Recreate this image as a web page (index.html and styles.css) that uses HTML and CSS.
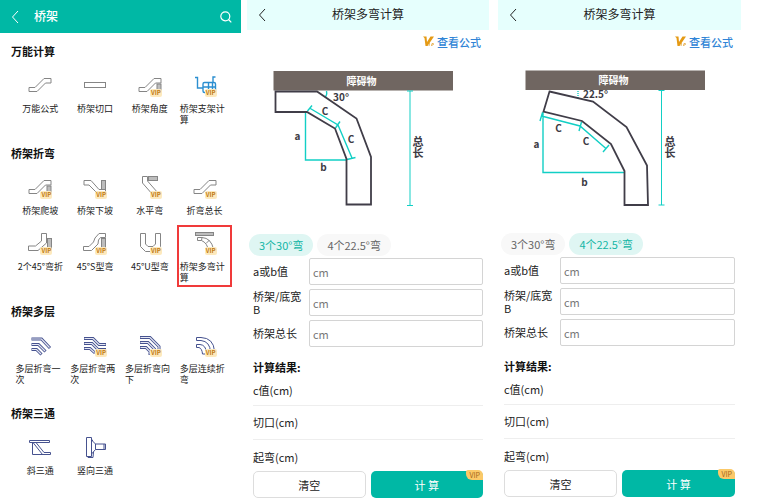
FILE: index.html
```html
<!DOCTYPE html>
<html lang="zh-CN">
<head>
<meta charset="utf-8">
<meta name="viewport" content="width=device-width, initial-scale=1">
<title>桥架</title>
<link rel="stylesheet" href="styles.css">
</head>
<body>
<svg class="defs" aria-hidden="true">
  <symbol id="slope" viewBox="0 0 24 24">
    <path d="M1 18.500V14.500H7L16 5.500H23V10H17.500L9 18.500Z"/>
  </symbol>
  <symbol id="vmark" viewBox="0 0 12 11">
    <path d="M0 .5H3.500L4 6L7.500 .5H11L4.500 10H2.500L1.500 2Z" fill="#e59a14"/>
    <path d="M6.500 7L6 10M8.500 10L9 7.500Q11 7 10.500 8.500Q10 9 9 9" fill="none" stroke="#e8b45a" stroke-width="1"/>
  </symbol>
</svg>
<main class="screens">
  <section class="screen menu">
    <header class="bar bar-main">
      <button class="back" aria-label="返回"><svg viewBox="0 0 8 14"><path d="M7 1L1.500 7L7 13"/></svg></button>
      <h1>桥架</h1>
      <button class="search" aria-label="搜索"><svg viewBox="0 0 12 12"><circle cx="5.300" cy="5.300" r="4.500"/><path d="M8.500 8.500L11.300 11.300"/></svg></button>
    </header>

    <section class="group">
      <h2>万能计算</h2>
      <div class="items">
        <a href="#"><svg class="icon" viewBox="0 0 24 24"><use href="#slope"/></svg><span>万能公式</span></a>
        <a href="#"><svg class="icon" viewBox="0 0 24 24"><rect x="1.500" y="9.500" width="21" height="5"/></svg><span>桥架切口</span></a>
        <a href="#"><svg class="icon" viewBox="0 0 24 24"><use href="#slope"/><rect class="wall" x="19" y="11" width="4" height="9"/></svg><b class="tag">VIP</b><span>桥架角度</span></a>
        <a href="#"><svg class="icon blue" viewBox="0 0 24 24"><path d="M2 4.500H4.500V15H10M22.500 4H20V9"/><rect x="10" y="9.500" width="12.500" height="10" rx="1.500"/><path d="M10 14H22.500M15.500 9.500V19M19.500 9.500V19"/></svg><b class="tag">VIP</b><span>桥架支架计算</span></a>
      </div>
    </section>

    <section class="group">
      <h2>桥架折弯</h2>
      <div class="items">
        <a href="#"><svg class="icon" viewBox="0 0 24 24"><use href="#slope"/><rect class="wall" x="19" y="11" width="4" height="9"/></svg><b class="tag">VIP</b><span>桥架爬坡</span></a>
        <a href="#"><svg class="icon" viewBox="0 0 24 24"><path d="M1 5.500H8L16 14.500H22.500V18.500H14.500L6 10H1Z"/><rect class="wall" x="18.500" y="5.500" width="4" height="9"/></svg><b class="tag">VIP</b><span>桥架下坡</span></a>
        <a href="#"><svg class="icon" viewBox="0 0 24 24"><path d="M15 20L4.500 8V1.500H9.500V6L20 18"/><rect class="wall" x="10.500" y="1.500" width="9" height="4"/></svg><b class="tag">VIP</b><span>水平弯</span></a>
        <a href="#"><svg class="icon" viewBox="0 0 24 24"><use href="#slope"/></svg><b class="tag">VIP</b><span>折弯总长</span></a>
        <a href="#"><svg class="icon" viewBox="0 0 24 24"><path d="M.5 15H7.500L13.500 10V2.500H18.500V12L10 19.500H.5Z"/><rect class="wall" x="19.500" y="7.500" width="4" height="10"/></svg><b class="tag">VIP</b><span>2个45°弯折</span></a>
        <a href="#"><svg class="icon" viewBox="0 0 24 24"><path d="M.5 15.500H6L10.500 11L12 7L16 2.500H22.500V6.500H17.500L15.500 9L15 13L8.500 19.500H.5Z"/><rect class="wall" x="18.500" y="7.500" width="4" height="10"/></svg><b class="tag">VIP</b><span>45°S型弯</span></a>
        <a href="#"><svg class="icon" viewBox="0 0 24 24"><path d="M2.500 2.500V15.500L7.500 20.500H17.500L22.500 15.500V2.500H17.500V13L15 15.500H10L7.500 13V2.500Z"/></svg><b class="tag">VIP</b><span>45°U型弯</span></a>
        <a href="#" class="selected"><svg class="icon" viewBox="0 0 24 24"><rect class="wall" x="2.500" y="1.500" width="18" height="3"/><path d="M15.500 20Q14.500 12 8.500 9.500H4.500V6.500H9Q18 7 20.500 18M9 6.500L8.500 9.500M16.500 9L13 12.500"/></svg><b class="tag">VIP</b><span>桥架多弯计算</span></a>
      </div>
    </section>

    <section class="group">
      <h2>桥架多层</h2>
      <div class="items">
        <a href="#"><svg class="icon navy" viewBox="0 0 24 24"><path class="band" d="M3.500 6H13.500L22 15M3.500 11.500H10.500L17.500 18.500M3.500 16.500H8.500L13.500 21.500"/><path class="fill" d="M4 6H13.500L21.500 14.500M4 11.500H10.500L17 18M4 16.500H8.500L13 21"/></svg><span>多层折弯一次</span></a>
        <a href="#"><svg class="icon navy" viewBox="0 0 24 24"><path class="band" d="M1 5.500H10L16 11.500H23M1 10.500H9L15 16.500H23M1 15.500H7L12 20"/><path class="fill" d="M1.500 5.500H10L16 11.500H22.500M1.500 10.500H9L15 16.500H22.500M1.500 15.500H7L11.500 19.500"/></svg><b class="tag">VIP</b><span>多层折弯两次</span></a>
        <a href="#"><svg class="icon navy" viewBox="0 0 24 24"><path class="band" d="M2 4.500H12L21 13.500V19M2 9.500H10L16.500 16V20M2 14.500H8L12 18.500V22"/><path class="fill" d="M2.500 4.500H12L21 13.500V18.500M2.500 9.500H10L16.500 16V19.500M2.500 14.500H8L12 18.500V21.500"/></svg><b class="tag">VIP</b><span>多层折弯向下</span></a>
        <a href="#"><svg class="icon navy" viewBox="0 0 24 24"><path d="M3.500 7.500V4.500H8Q20.500 5 21.500 18M3.500 7.500H8Q17 8.500 17.500 19M3.500 14.500V11.500H7Q13 12 13.500 20M3.500 14.500H6Q9 15.500 9.500 21H13"/></svg><b class="tag">VIP</b><span>多层连续折弯</span></a>
      </div>
    </section>

    <section class="group">
      <h2>桥架三通</h2>
      <div class="items">
        <a href="#"><svg class="icon navy" viewBox="0 0 24 24"><path d="M1.500 5.500H21.500V7.500H1.500ZM4.500 7.500V19.500H22.500V17.500H16L8 7.500M5 7.500L14.500 19.500"/></svg><span>斜三通</span></a>
        <a href="#"><svg class="icon navy" viewBox="0 0 24 24"><path d="M3.500 2.500H8.500V21.500H3.500ZM8.500 5L12.500 9V14.500L8.500 19M12.500 9H22.500V14.500H12.500M21 9V14.500M5 21.500V22.500H10L10.500 17M8.500 5H9.500V6"/></svg><span>竖向三通</span></a>
      </div>
    </section>
  </section>

  <section class="screen calc calc-30">
    <header class="bar">
      <button class="back" aria-label="返回"><svg viewBox="0 0 8 14"><path d="M7 1L1.500 7L7 13"/></svg></button>
      <h1>桥架多弯计算</h1>
    </header>
    <a class="formula" href="#"><svg viewBox="0 0 12 11"><use href="#vmark"/></svg>查看公式</a>
    <svg class="diagram" viewBox="247 69 242 140" role="img" aria-label="3个30°弯">
      <rect class="obstacle" x="273.500" y="71" width="179.500" height="19.500"/>
      <text class="obstacle-text" x="361.500" y="84.500">障碍物</text>
      <path class="dim" d="M305.500 112V160H346M309.500 108L338 125L352 158M307.500 111L312 105.500M335.500 128L340 121.500M347 159.500L355.500 157.500M326.500 91Q327.500 94 325.500 97"/>
      <path class="dim thin" d="M410 91V205.500M407 91H413M407 205.500H413"/>
      <path class="tray" d="M275.500 91.500H317L356.500 118.500L371 157V204.500H346.500V159L335 128.500L307 112H275.500Z"/>
      <text x="341" y="101">30°</text>
      <text x="325" y="114.500">C</text>
      <text x="351" y="143">C</text>
      <text x="297.500" y="139.500">a</text>
      <text x="323.500" y="171">b</text>
      <text class="vertical" x="418" y="147">总长</text>
    </svg>
    <div class="tabs">
      <button class="active">3个30°弯</button>
      <button>4个22.5°弯</button>
    </div>
    <form class="form">
      <label for="ab1">a或b值</label><input id="ab1" type="text" placeholder="cm">
      <label for="w1">桥架/底宽B</label><input id="w1" type="text" placeholder="cm">
      <label for="len1">桥架总长</label><input id="len1" type="text" placeholder="cm">
    </form>
    <div class="results">
      <h2>计算结果:</h2>
      <p>c值(cm)</p>
      <p>切口(cm)</p>
      <p>起弯(cm)</p>
    </div>
    <div class="actions">
      <button class="clear">清空</button>
      <button class="submit">计 算<span class="badge">VIP</span></button>
    </div>
  </section>

  <section class="screen calc calc-22">
    <header class="bar">
      <button class="back" aria-label="返回"><svg viewBox="0 0 8 14"><path d="M7 1L1.500 7L7 13"/></svg></button>
      <h1>桥架多弯计算</h1>
    </header>
    <a class="formula" href="#"><svg viewBox="0 0 12 11"><use href="#vmark"/></svg>查看公式</a>
    <svg class="diagram" viewBox="498 69 243 140" role="img" aria-label="4个22.5°弯">
      <rect class="obstacle" x="525.500" y="70.500" width="179.500" height="19.500"/>
      <text class="obstacle-text" x="613.500" y="84">障碍物</text>
      <path class="dim" d="M543 112V172.500H624M541.500 116L580 126L606.500 149M540 121L542.500 112.500M579 131L581.500 122M603 152L609 145"/>
      <path class="dim" stroke-dasharray="1 1" d="M578 91V98"/>
      <path class="dim thin" d="M661.500 90.500V205M658.500 90.500H664.500M658.500 205H664.500"/>
      <path class="tray" d="M549.500 91.500L593 101.500L626.500 127L647 165.500L648 205H624.500V171L611 144L582 121L543.500 111.500Z"/>
      <text x="595.500" y="98">22.5°</text>
      <text x="558.500" y="131.500">C</text>
      <text x="586" y="144.500">C</text>
      <text x="536.500" y="148">a</text>
      <text x="584.500" y="185.500">b</text>
      <text class="vertical" x="670" y="147">总长</text>
    </svg>
    <div class="tabs">
      <button>3个30°弯</button>
      <button class="active">4个22.5°弯</button>
    </div>
    <form class="form">
      <label for="ab2">a或b值</label><input id="ab2" type="text" placeholder="cm">
      <label for="w2">桥架/底宽B</label><input id="w2" type="text" placeholder="cm">
      <label for="len2">桥架总长</label><input id="len2" type="text" placeholder="cm">
    </form>
    <div class="results">
      <h2>计算结果:</h2>
      <p>c值(cm)</p>
      <p>切口(cm)</p>
      <p>起弯(cm)</p>
    </div>
    <div class="actions">
      <button class="clear">清空</button>
      <button class="submit">计 算<span class="badge">VIP</span></button>
    </div>
  </section>
</main>
</body>
</html>
```
FILE: styles.css
```css
* {
  box-sizing: border-box;
}

body {
  margin: 0;
  background: #fff;
  color: #222;
  font-family: "Noto Sans CJK SC", "Noto Sans", sans-serif;
  font-size: 11px;
}

h1, h2, p {
  margin: 0;
}

a {
  color: inherit;
  text-decoration: none;
}

button, input {
  font: inherit;
  color: inherit;
  margin: 0;
  padding: 0;
  border: 0;
  background: none;
}

svg {
  display: block;
}

.defs {
  position: absolute;
  width: 0;
  height: 0;
}

.screens {
  display: grid;
  grid-template-columns: 241fr 6px 242fr 9px 243fr;
  padding-right: 17px;
}

.menu {
  grid-column: 1;
}

.calc-30 {
  grid-column: 3;
}

.calc-22 {
  grid-column: 5;
}

/* Title bars */
.bar {
  position: relative;
  display: flex;
  align-items: center;
  justify-content: center;
  height: 30px;
  background: #e6fffd;
}

.bar h1 {
  font-size: 12px;
  font-weight: 400;
  line-height: 18px;
  padding-bottom: 2px;
}

.back svg {
  width: 8px;
  height: 14px;
  fill: none;
  stroke: currentColor;
  stroke-width: 1;
}

.calc .back {
  position: absolute;
  left: 11px;
}

.bar-main {
  justify-content: flex-start;
  gap: 15px;
  height: 33px;
  padding: 0 9px 0 11px;
  background: #00b8a5;
  color: #fff;
}

.bar-main h1 {
  font-weight: 500;
}

.search {
  margin-left: auto;
}

.search svg {
  width: 12px;
  height: 12px;
  fill: none;
  stroke: currentColor;
  stroke-width: 1.2;
}

/* Icon menu */
.group {
  padding: 10px 9px 12px 11px;
}

.group h2 {
  margin-bottom: 8px;
  font-size: 11px;
  line-height: 16px;
  color: #111;
}

.items {
  display: grid;
  grid-template-columns: repeat(4, 1fr);
  grid-auto-rows: 56px;
  align-items: start;
  padding-left: 2px;
}

.items a {
  position: relative;
  display: flex;
  flex-direction: column;
  align-items: center;
  gap: 6px;
  padding: 6px 2px 4px;
  font-size: 9px;
  line-height: 11px;
}

.items span {
  max-width: 50px;
}

.items .selected {
  box-shadow: inset 0 0 0 2px #f03a3a;
}

.tag {
  position: absolute;
  top: 22px;
  left: 50%;
  width: 12px;
  border-radius: 2px;
  background: #fde9bd;
  color: #c07a10;
  font-size: 6px;
  line-height: 8px;
  text-align: center;
}

.icon {
  width: 24px;
  height: 24px;
  fill: none;
  stroke: #858585;
  stroke-width: 1;
}

.icon .wall {
  fill: #bdbdbd;
}

.icon.blue {
  stroke: #2c8fd0;
  stroke-width: 1.4;
}

.icon.navy {
  stroke: #46528f;
}

.icon .band {
  stroke-width: 3;
}

.icon .fill {
  stroke: #e6e8f4;
  stroke-width: 1.2;
}

/* Calculator screens */
.formula {
  display: flex;
  align-items: center;
  justify-content: flex-end;
  gap: 2px;
  height: 23px;
  margin-bottom: 16px;
  padding-right: 8px;
  font-weight: 500;
  color: #3084d6;
}

.formula svg {
  width: 12px;
  height: 11px;
}

.diagram {
  width: 100%;
  height: auto;
}

.diagram text {
  font-size: 10px;
  font-weight: 700;
  text-anchor: middle;
  fill: #3c3a44;
}

.diagram .vertical {
  font-size: 11px;
  writing-mode: vertical-rl;
}

.diagram .obstacle {
  fill: #706661;
}

.diagram .obstacle-text {
  fill: #fff;
}

.diagram .tray {
  fill: none;
  stroke: #403d48;
  stroke-width: 1.8;
}

.diagram .dim {
  fill: none;
  stroke: #12cfc5;
  stroke-width: 1.4;
}

.diagram .thin {
  stroke-width: 1;
}

.tabs {
  display: flex;
  gap: 4px;
  margin-top: 25px;
  padding-left: 2px;
}

.calc-22 .tabs {
  margin-top: 24px;
  padding-left: 3px;
}

.tabs button {
  height: 22px;
  padding: 0 10px;
  border-radius: 11px;
  background: #f8f8f8;
  color: #666;
}

.tabs .active {
  background: #dff6f3;
  color: #12b5a5;
}

.form {
  display: grid;
  grid-template-columns: 50px 1fr;
  align-items: center;
  gap: 4px 6px;
  padding: 2px 6px 0;
}

.form label {
  line-height: 13px;
}

.form input {
  width: 100%;
  height: 27px;
  padding: 0 3px;
  border: 1px solid #d4d4d4;
  border-radius: 2px;
}

.form input::placeholder {
  color: #777;
  opacity: 1;
}

.results {
  padding: 12px 6px 0;
}

.results h2 {
  font-size: 11px;
  line-height: 16px;
  color: #111;
}

.results p {
  height: 34px;
  line-height: 33px;
  border-bottom: 1px solid #eee;
}

.results h2 + p {
  height: 31px;
  line-height: 30px;
}

.results p:last-child {
  height: 31px;
  line-height: 34px;
  border-bottom: 0;
}

.actions {
  display: grid;
  grid-template-columns: 1fr 1fr;
  gap: 5px;
  padding: 0 6px;
}

.actions button {
  position: relative;
  height: 27px;
  border-radius: 5px;
}

.clear {
  border: 1px solid #ddd;
}

.actions .submit {
  background: #00b8a5;
  color: #fff;
}

.badge {
  position: absolute;
  top: -1px;
  right: 0;
  padding: 0 3px;
  border-radius: 2px 5px 0 6px;
  background: #fbc968;
  color: #a3671a;
  font-size: 7px;
  line-height: 10px;
}
```
